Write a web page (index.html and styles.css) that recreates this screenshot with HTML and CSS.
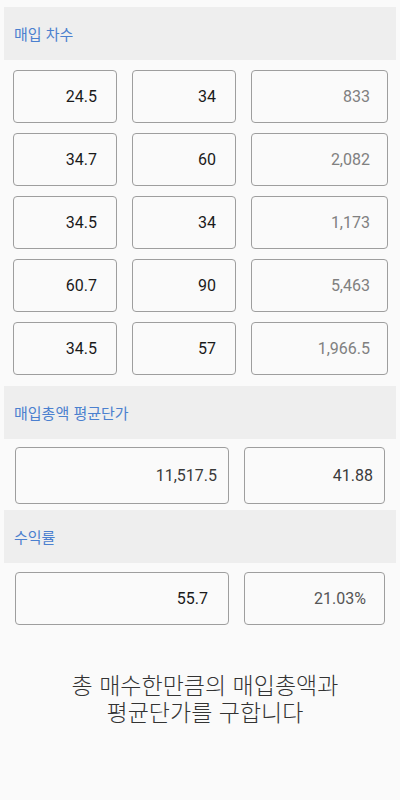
FILE: index.html
```html
<!DOCTYPE html>
<html lang="ko">
<head>
<meta charset="utf-8">
<link rel="stylesheet" href="styles.css">
</head>
<body>
<div class="page">
  <div class="header h1">매입 차수</div>
  <div class="grid3">
    <div class="box in">24.5</div><div class="box in">34</div><div class="box out">833</div>
    <div class="box in">34.7</div><div class="box in">60</div><div class="box out">2,082</div>
    <div class="box in">34.5</div><div class="box in">34</div><div class="box out">1,173</div>
    <div class="box in">60.7</div><div class="box in">90</div><div class="box out">5,463</div>
    <div class="box in">34.5</div><div class="box in">57</div><div class="box out">1,966.5</div>
  </div>
  <div class="header h2">매입총액 평균단가</div>
  <div class="grid2 g-a">
    <div class="box dark pad12">11,517.5</div><div class="box dark pad12">41.88</div>
  </div>
  <div class="header h3">수익률</div>
  <div class="grid2 g-b">
    <div class="box in pad21">55.7</div><div class="box mid pad19">21.03%</div>
  </div>
  <p class="note">총 매수한만큼의 매입총액과<br>평균단가를 구합니다</p>
</div>
</body>
</html>
```
FILE: styles.css
```css
html, body {
  margin: 0;
  padding: 0;
  background: #fafafa;
}
body {
  width: 400px;
  height: 800px;
  font-family: Roboto, "Noto Sans CJK KR", sans-serif;
}
.page {
  display: flex;
  flex-direction: column;
  padding-top: 7px;
}
.header {
  margin: 0 4px;
  background: #eeeeee;
  height: 53px;
  display: flex;
  align-items: center;
  padding-left: 10px;
  color: #4b80cf;
  font-family: "Noto Sans CJK KR", sans-serif;
  font-size: 15px;
  box-sizing: border-box;
}
.h2 { margin-top: 11px; }
.h3 { margin-top: 6px; }
.grid3 {
  display: grid;
  grid-template-columns: 104px 104px 137px;
  grid-auto-rows: 53px;
  column-gap: 15px;
  row-gap: 10px;
  padding: 10px 0 0 13px;
}
.grid2 {
  display: grid;
  grid-template-columns: 214px 141px;
  column-gap: 15px;
  padding-left: 15px;
}
.g-a { margin-top: 8px; grid-auto-rows: 57px; }
.g-b { margin-top: 9px; grid-auto-rows: 53px; }
.box {
  border: 1px solid #9e9e9e;
  border-radius: 4px;
  display: flex;
  align-items: center;
  justify-content: flex-end;
  padding-right: 19px;
  font-size: 16px;
  box-sizing: border-box;
}
.in { color: #1a1a1a; }
.out { color: #808080; padding-right: 17px; }
.dark { color: #3a3a3a; }
.mid { color: #555; }
.pad12 { padding-right: 11px; }
.pad21 { padding-right: 20px; }
.pad19 { padding-right: 18px; }
.note {
  margin: 46px 0 0;
  text-align: center;
  font-family: "Noto Sans CJK KR", sans-serif;
  font-weight: 300;
  font-size: 23px;
  line-height: 27px;
  color: #333;
  padding-left: 10px;
}
```
